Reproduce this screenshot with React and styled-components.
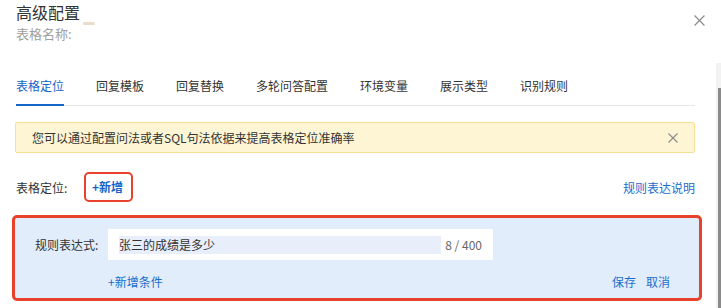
import * as React from "react";
import styled, {createGlobalStyle} from "styled-components";

const GlobalStyle = createGlobalStyle`
  html, body {
    margin: 0;
    padding: 0;
    background: #fff;
  }
  body {
    font-family: "Noto Sans CJK SC", "Noto Sans", "Liberation Sans", sans-serif;
    color: #333;
  }
`;

const tabs = ["表格定位", "回复模板", "回复替换", "多轮问答配置", "环境变量", "展示类型", "识别规则"];

const CloseIcon = ({size = 11, color = "#888"}) => (
  <svg width={size} height={size} viewBox="0 0 10 10">
    <path d="M0.5 0.5 L9.5 9.5 M9.5 0.5 L0.5 9.5" stroke={color} strokeWidth="1.1" fill="none"/>
  </svg>
);

const App = () => {
  return (
    <>
      <GlobalStyle/>
      <Page>
        <Header>
          <Titles>
            <Title>高级配置</Title>
            <SubTitle>表格名称:</SubTitle>
            <Smudge/>
          </Titles>
          <CloseButton><CloseIcon size={11} color="#8c8c8c"/></CloseButton>
        </Header>

        <Tabs>
          {tabs.map((t, idx) => (
            <Tab key={t} active={idx === 0}>{t}</Tab>
          ))}
        </Tabs>

        <Alert>
          <span>您可以通过配置问法或者SQL句法依据来提高表格定位准确率</span>
          <AlertClose><CloseIcon size={10} color="#8a8a8a"/></AlertClose>
        </Alert>

        <LocateRow>
          <Label>表格定位:</Label>
          <AddButton>+新增</AddButton>
          <Link>规则表达说明</Link>
        </LocateRow>

        <RuleBox>
          <RuleRow>
            <RuleLabel>规则表达式:</RuleLabel>
            <InputWrap>
              <InputText>张三的成绩是多少</InputText>
              <Count>8 / 400</Count>
            </InputWrap>
          </RuleRow>
          <ActionRow>
            <Link small>+新增条件</Link>
            <Actions>
              <Link>保存</Link>
              <Link>取消</Link>
            </Actions>
          </ActionRow>
        </RuleBox>

        <ScrollTrack>
          <ScrollThumb/>
        </ScrollTrack>
      </Page>
    </>
  );
};

const Page = styled.div`
  position: relative;
  width: 721px;
  height: 308px;
  overflow: hidden;
  background: #fff;
`;

const Header = styled.div`
  display: flex;
  justify-content: space-between;
  align-items: flex-start;
  padding: 2px 16px 0 16px;
`;

const Titles = styled.div`
  position: relative;
  display: flex;
  flex-direction: column;
  gap: 3px;
`;

const Title = styled.div`
  font-size: 16px;
  line-height: 20px;
  color: #333;
`;

const SubTitle = styled.div`
  font-size: 13px;
  line-height: 18px;
  color: #a0a0a0;
`;

const Smudge = styled.span`
  position: absolute;
  left: 67px;
  top: 20px;
  width: 12px;
  height: 3px;
  border-radius: 2px;
  background: #ecdccb;
`;

const CloseButton = styled.div`
  margin-top: 13px;
  margin-right: 0px;
  display: flex;
`;

const Tabs = styled.div`
  display: flex;
  gap: 32px;
  margin: 34px 26px 0 16px;
  border-bottom: 1px solid #e6e6e6;
`;

const Tab = styled.div`
  font-size: 12px;
  line-height: 18px;
  padding-bottom: 9px;
  margin-bottom: -1px;
  color: ${props => props.active ? "#1565c8" : "#333"};
  border-bottom: 2px solid ${props => props.active ? "#1565c8" : "transparent"};
`;

const Alert = styled.div`
  display: flex;
  align-items: center;
  justify-content: space-between;
  margin: 16px 26px 0 15px;
  height: 29px;
  padding: 0 16px 0 16px;
  background: #fdf5d3;
  border: 1px solid #f7e08f;
  border-radius: 2px;
  font-size: 12px;
  color: #333;
`;

const AlertClose = styled.div`
  display: flex;
`;

const LocateRow = styled.div`
  display: flex;
  align-items: center;
  margin: 19px 26px 0 16px;
  height: 30px;
`;

const Label = styled.div`
  font-size: 12px;
  color: #333;
  width: 68px;
`;

const AddButton = styled.div`
  font-size: 12px;
  font-weight: 700;
  color: #1565c8;
  border: 2px solid #e8412c;
  border-radius: 5px;
  height: 26px;
  line-height: 26px;
  padding: 0 8px 0 6px;
  margin-right: auto;
`;

const Link = styled.div`
  font-size: 12px;
  color: #1a6dcc;
  cursor: pointer;
`;

const RuleBox = styled.div`
  margin: 13px 19px 0 12px;
  border: 3px solid #e8412c;
  border-radius: 5px;
  background: #e1edfb;
  padding: 11px 29px 8px 20px;
`;

const RuleRow = styled.div`
  display: flex;
  align-items: center;
`;

const RuleLabel = styled.div`
  width: 73px;
  font-size: 12px;
  color: #333;
`;

const InputWrap = styled.div`
  display: flex;
  align-items: center;
  width: 385px;
  height: 31px;
  background: #fff;
  box-sizing: border-box;
  padding: 0 11px 0 11px;
`;

const InputText = styled.div`
  flex: 1;
  height: 18px;
  line-height: 18px;
  background: #e8eefa;
  font-size: 12px;
  color: #333;
`;

const Count = styled.div`
  margin-left: 4px;
  font-size: 12px;
  color: #666;
`;

const ActionRow = styled.div`
  display: flex;
  align-items: center;
  justify-content: space-between;
  margin-top: 12px;
  padding-left: 73px;
  height: 18px;
`;

const Actions = styled.div`
  display: flex;
  gap: 10px;
`;

const ScrollTrack = styled.div`
  position: absolute;
  right: 0;
  top: 63px;
  bottom: 0;
  width: 5px;
  background: #f2f2f2;
`;

const ScrollThumb = styled.div`
  position: absolute;
  right: 0;
  top: 25px;
  bottom: 0;
  width: 3px;
  background: #8a8a8a;
`;

export default App;
